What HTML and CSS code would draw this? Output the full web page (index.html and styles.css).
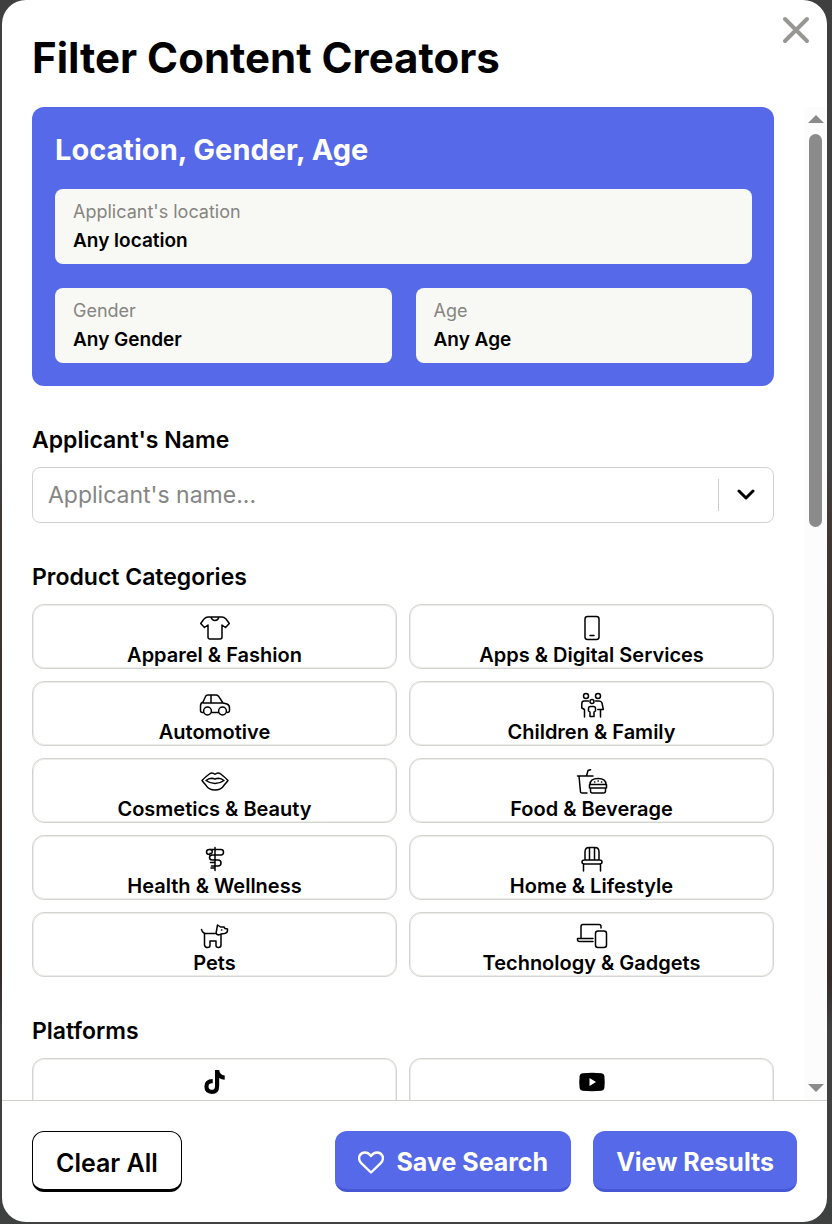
FILE: index.html
```
<!DOCTYPE html>
<html lang="en">
<head>
<meta charset="utf-8">
<meta name="viewport" content="width=device-width, initial-scale=1">
<title>Filter Content Creators</title>
<link rel="stylesheet" href="styles.css">
</head>
<body>
<main class="modal" role="dialog" aria-labelledby="modal-title">
  <header class="modal-header">
    <h1 class="modal-title" id="modal-title">Filter Content Creators</h1>
    <button class="close" type="button" aria-label="Close"><svg width="28" height="28" viewBox="0 0 28 28" fill="none" stroke="#979693" stroke-width="4" stroke-linecap="round"><path d="M3 3l22 22M25 3L3 25"/></svg></button>
  </header>
  <div class="modal-body">
    <div class="content">
      <section class="panel">
        <h2 class="panel-title">Location, Gender, Age</h2>
        <div class="fields">
          <button class="field wide" type="button"><span class="field-label">Applicant's location</span><span class="field-value">Any location</span></button>
          <button class="field" type="button"><span class="field-label">Gender</span><span class="field-value">Any Gender</span></button>
          <button class="field" type="button"><span class="field-label">Age</span><span class="field-value">Any Age</span></button>
        </div>
      </section>

      <section class="group">
        <label class="group-title" for="name">Applicant's Name</label>
        <div class="combo">
          <input class="combo-input" id="name" type="text" placeholder="Applicant's name...">
          <button class="combo-toggle" type="button" aria-label="Show names"><svg width="18" height="12" viewBox="0 0 18 12" fill="none" stroke="#000" stroke-width="3" stroke-linecap="round" stroke-linejoin="round"><path d="M2 2l7 7 7-7"/></svg></button>
        </div>
      </section>

      <section class="group">
        <h2 class="group-title">Product Categories</h2>
        <div class="cards">
          <button class="card" type="button"><svg class="icon" viewBox="0 0 32 26"><path d="M12 2H9Q7 2 5 4L1.700 8.500 5.500 12.500 9 10V22q0 2 2 2H21q2 0 2-2V10l3.500 2.500 3.800-4L27 4Q25 2 23 2H20q-1 3.500-4 3.500T12 2zM12 2H20"/></svg>Apparel &amp; Fashion</button>
          <button class="card" type="button"><svg class="icon" viewBox="0 0 32 26"><rect x="9" y="1.500" width="14" height="23" rx="2.500"/><path d="M14 20.500h4"/></svg>Apps &amp; Digital Services</button>
          <button class="card" type="button"><svg class="icon" viewBox="0 0 32 26"><path d="M4.500 20.500H3.500Q1.500 20.500 1.500 18.500V14q0-3 2.500-4L6.500 4.500Q7 3 9 3H17q1.500 0 2.500 1.200L24 11l4 1q2.500 1 2.500 4v2.500q0 2-2.500 2M12.500 20.500h7M4 11H24M12 3v8"/><circle cx="8.500" cy="19" r="3.900"/><circle cx="23.500" cy="19" r="3.900"/></svg>Automotive</button>
          <button class="card" type="button"><svg class="icon" viewBox="0 0 32 26"><circle cx="10" cy="4" r="2.500"/><circle cx="22" cy="4" r="2.500"/><circle cx="16" cy="9.500" r="2"/><path d="M12.500 9H8Q5.800 9 5.800 12v4l2.700 1.500V25M19.500 9H23q2.300 0 3 2l1.300 6.500H24.500V25M21.800 17.500h2.700M14.500 14.500h3q2 0 2 2V19l-1.500 1v4.500h-4V20l-1.500-1v-2.500q0-2 2-2"/></svg>Children &amp; Family</button>
          <button class="card" type="button"><svg class="icon" viewBox="0 0 32 26"><path d="M3 11.500Q8 6.500 11 4.500q2.500-1.500 5 .8 2.500-2.300 5-.8 3 2 8 7-1.500 2-4 4.800Q22 21 16 21T7 16.300Q4.500 13.500 3 11.500zM7 11.500Q9.500 9.500 12.500 9.300q2 0 3.500.9 1.500-.9 3.500-.9 3 .2 5.500 2.200-4 3-9 3t-9-3z"/></svg>Cosmetics &amp; Beauty</button>
          <button class="card" type="button"><svg class="icon" viewBox="0 0 32 26"><path d="M1.500 7H17M3 7l1.500 16Q4.600 24 6 24h5M10.500 7l1.500-5.500 2.500-.8M14 15.500q0-6 8-6t8 6zM13.500 15.500h17v3.500h-17zM14.500 19v3q0 2 2 2h11q2 0 2-2v-3M18.500 13h.3M22 12h.3M25.500 13h.3"/></svg>Food &amp; Beverage</button>
          <button class="card" type="button"><svg class="icon" viewBox="0 0 32 26"><path d="M16 1.500V24.500M12 22h4M11 3.500H22q2.500 0 2.500 2.700T22 9H13.500q-3 0-3 2.500t3 2.500H19q3 0 3 3t-3 3h-6.500M11.500 16.500H16M10.500 8.500Q7.500 8.500 7.500 6t3-2.500 2.700 2.300-2.200 1.500"/></svg>Health &amp; Wellness</button>
          <button class="card" type="button"><svg class="icon" viewBox="0 0 32 26"><path d="M9 14V6q0-4.500 4-4.500h6q4 0 4 4.500v8M13.500 2V14M18.500 2V14M8.500 14h15q2.500 0 2.500 2t-2.500 2h-15Q6 18 6 16t2.500-2M7.500 18v7M24.500 18v7"/></svg>Home &amp; Lifestyle</button>
          <button class="card" type="button"><svg class="icon" viewBox="0 0 32 26"><path d="M2.500 6.500l1 2.200Q4.500 10.500 6.500 10.500H17L18.500 2l3 2h3.500l1 1.500 2.500.5v1.500q0 2.500-3 3l-3.500.5V22q0 2.500-2.500 2.500T17 22.500V18H11v4.500q0 2-2.500 2T5.500 22V10.500M17 10.500q2 2.500 5 .5M22.500 7h.3"/></svg>Pets</button>
          <button class="card" type="button"><svg class="icon" viewBox="0 0 32 26"><path d="M5 15V3.500q0-2 2-2H23q2 0 2 2V5M17 15.500H1.500v1q0 2 2 2H17"/><rect x="19.500" y="8" width="11" height="16.500" rx="2.500"/></svg>Technology &amp; Gadgets</button>
        </div>
      </section>

      <section class="group">
        <h2 class="group-title">Platforms</h2>
        <div class="cards">
          <button class="card" type="button" aria-label="TikTok"><svg class="icon solid" viewBox="0 0 32 26"><path d="M16 1h4.200q.4 4.800 5.500 5.500v4.200q-3 0-5.500-1.800v8q0 8-7.300 8-7.500-.5-7.500-7.500 0-7.500 8.300-7.500v4.300q-4.200-.3-4.200 3.200 0 3 3 3.400 3.500 0 3.500-3.900z"/></svg></button>
          <button class="card" type="button" aria-label="YouTube"><svg class="icon solid" viewBox="0 0 32 26"><path fill-rule="evenodd" d="M6.500 4.200q9.500-.8 19 0 2.500.2 2.900 2.800.7 6 0 12-.4 2.600-2.900 2.800-9.500.8-19 0-2.500-.2-2.900-2.800-.7-6 0-12 .4-2.600 2.900-2.800zM13.500 9v8l6.500-4z"/></svg></button>
        </div>
      </section>
    </div>
    <div class="scrollbar" aria-hidden="true">
      <svg width="16" height="8" viewBox="0 0 16 8"><path d="M8 0l8 8H0z"/></svg>
      <div class="track"><div class="thumb"></div></div>
      <svg width="16" height="8" viewBox="0 0 16 8"><path d="M0 0h16L8 8z"/></svg>
    </div>
  </div>
  <footer class="modal-footer">
    <button class="btn outline" type="button">Clear All</button>
    <button class="btn primary save" type="button"><svg width="26" height="23" viewBox="0 0 26 23" fill="none" stroke="#fff" stroke-width="2.400" stroke-linejoin="round"><path d="M13 21.500L3 11.800C-1 7 2 1.500 7 1.500q3.500 0 6 3.500 2.500-3.500 6-3.500c5 0 8 5.500 4 10.300z"/></svg>Save Search</button>
    <button class="btn primary" type="button">View Results</button>
  </footer>
</main>
</body>
</html>
```
FILE: styles.css
```
* { box-sizing: border-box; }

body {
  margin: 0;
  height: 100vh;
  padding: 0 5px 2px 2px;
  background: linear-gradient(#3f3f3f 38%, #40352f 45%, #342c2a 80%, #3f4040 84%);
  color: #000;
  font-family: Inter, "Noto Sans", sans-serif;
}

button, input { font: inherit; color: inherit; }
button { cursor: pointer; }
h1, h2 { margin: 0; }

.modal {
  display: flex;
  flex-direction: column;
  height: 100%;
  overflow: hidden;
  border-radius: 24px;
  background: #fff;
}

.modal-header {
  display: flex;
  justify-content: space-between;
  align-items: flex-start;
  padding: 16px 17px 24px 30px;
}
.modal-title {
  padding-top: 17px;
  font-size: 42px;
  line-height: 50px;
  font-weight: 700;
}
.close { display: flex; padding: 0; border: 0; background: none; }

.modal-body { display: flex; flex: 1; min-height: 0; }
.content {
  flex: 1;
  min-width: 0;
  padding: 0 30px;
  overflow-y: auto;
  scrollbar-width: none;
}

.panel { padding: 23px 22px 23px 23px; border-radius: 12px; background: #5569e9; }
.panel-title {
  margin-bottom: 20px;
  color: #fff;
  font-size: 29px;
  line-height: 39px;
  font-weight: 700;
}
.fields { display: grid; grid-template-columns: 1fr 1fr; gap: 24px; }
.field {
  display: flex;
  flex-direction: column;
  gap: 5px;
  padding: 11px 18px;
  border: 0;
  border-radius: 8px;
  background: #f8f9f4;
  text-align: left;
}
.wide { grid-column: 1 / -1; }
.field-label { color: #858581; font-size: 18px; line-height: 24px; }
.field-value { font-size: 19px; line-height: 24px; font-weight: 600; }

.group { margin-top: 38px; }
.group-title {
  display: block;
  margin-bottom: 11px;
  font-size: 23px;
  line-height: 32px;
  font-weight: 600;
}

.combo {
  display: flex;
  align-items: center;
  height: 56px;
  border: 1px solid #d2d2d0;
  border-radius: 8px;
}
.combo-input {
  flex: 1;
  min-width: 0;
  padding: 0 15px;
  border: 0;
  background: none;
  font-size: 23px;
}
.combo-input::placeholder { color: #858585; opacity: 1; }
.combo-toggle {
  display: flex;
  justify-content: center;
  align-items: center;
  width: 55px;
  height: 32px;
  padding: 0;
  border: 0;
  border-left: 1px solid #ccc;
  background: none;
}

.cards { display: grid; grid-template-columns: 1fr 1fr; gap: 12px; }
.card {
  display: flex;
  flex-direction: column;
  align-items: center;
  height: 65px;
  padding: 10px 0 0;
  border: 1px solid #d3d3cf;
  border-radius: 12px;
  background: #fff;
  box-shadow: inset 0 0 0 1px #ecece9;
  font-size: 20px;
  line-height: 28px;
  font-weight: 600;
}
.icon {
  flex: none;
  width: 32px;
  height: 26px;
  fill: none;
  stroke: #000;
  stroke-width: 1.5;
  stroke-linecap: round;
  stroke-linejoin: round;
}
.solid { fill: #000; stroke: none; }

.scrollbar {
  display: flex;
  flex-direction: column;
  align-items: center;
  width: 23px;
  padding: 8px 0;
  background: #fcfcfc;
  fill: #8b8b8b;
}
.track { flex: 1; width: 13px; margin: 11px 0; }
.thumb { height: 41.8%; border-radius: 7px; background: #8b8b8b; }

.modal-footer {
  display: flex;
  gap: 22px;
  padding: 30px;
  border-top: 1px solid #d2d2cd;
}
.btn {
  display: flex;
  align-items: center;
  gap: 12px;
  height: 61px;
  padding: 4px 23px 0;
  border: 0;
  border-radius: 12px;
  font-size: 25px;
  line-height: 32px;
  white-space: nowrap;
}
.outline { border: 1px solid #000; border-bottom-width: 3px; background: #fff; font-weight: 600; }
.primary { border-bottom: 3px solid #4657d5; background: #5569e9; color: #fff; font-weight: 700; }
.save { margin-left: auto; }
```
